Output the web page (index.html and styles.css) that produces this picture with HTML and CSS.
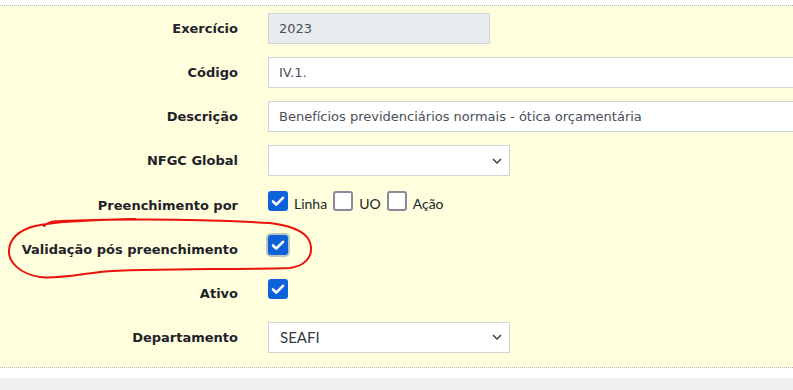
FILE: index.html
```html
<!DOCTYPE html>
<html lang="pt-BR">
<head>
    <meta charset="UTF-8">
    <meta name="viewport" content="width=device-width, initial-scale=1.0">
    <title>Editar Linha</title>
    <link rel="stylesheet" href="styles.css">
</head>
<body>
    <div class="page">
        <div class="panel">
            <div class="form-row">
                <label class="form-label" for="exercicio">Exercício</label>
                <div><input id="exercicio" class="field field-short" type="text" value="2023" readonly></div>
            </div>
            <div class="form-row">
                <label class="form-label" for="codigo">Código</label>
                <div class="field-clip"><input id="codigo" class="field field-wide" type="text" value="IV.1."></div>
            </div>
            <div class="form-row">
                <label class="form-label" for="descricao">Descrição</label>
                <div class="field-clip"><input id="descricao" class="field field-wide" type="text" value="Benefícios previdenciários normais - ótica orçamentária"></div>
            </div>
            <div class="form-row">
                <label class="form-label" for="nfgc">NFGC Global</label>
                <div>
                    <select id="nfgc" class="field field-select">
                        <option value=""></option>
                    </select>
                </div>
            </div>
            <div class="form-row">
                <span class="form-label">Preenchimento por</span>
                <div class="check-group">
                    <label class="check-item"><input type="checkbox" class="check" checked><span>Linha</span></label>
                    <label class="check-item"><input type="checkbox" class="check"><span>UO</span></label>
                    <label class="check-item"><input type="checkbox" class="check"><span>Ação</span></label>
                </div>
            </div>
            <div class="form-row">
                <label class="form-label" for="validacao">Validação pós preenchimento</label>
                <div class="check-group">
                    <input id="validacao" type="checkbox" class="check check-focus" checked>
                </div>
            </div>
            <div class="form-row">
                <label class="form-label" for="ativo">Ativo</label>
                <div class="check-group">
                    <input id="ativo" type="checkbox" class="check" checked>
                </div>
            </div>
            <div class="form-row">
                <label class="form-label" for="departamento">Departamento</label>
                <div>
                    <select id="departamento" class="field field-select">
                        <option>SEAFI</option>
                    </select>
                </div>
            </div>

            <!-- marcação feita à mão no print -->
            <svg class="annotation" width="793" height="390" viewBox="0 0 793 390">
                <path d="M44 226 C48 222 52 221 60 221 C120 219 200 219 270 223 C295 226 310 234 311 247 C312 258 304 266 290 268 C230 270 150 268 100 272 C75 275 55 279 40 277 C20 274 8 262 9 250 C10 238 20 230 35 226 C48 223 80 220 135 219" fill="none" stroke="#e8140c" stroke-width="2" stroke-linecap="round"/>
            </svg>
        </div>
        <div class="footer-bar"></div>
    </div>
</body>
</html>
```

FILE: styles.css
```css
body {
    margin: 0;
    background: #ffffff;
    font-family: "DejaVu Sans", Verdana, sans-serif;
    color: #212529;
    overflow: hidden;
}

.page {
    width: 793px;
    height: 390px;
    padding-top: 5px;
    box-sizing: border-box;
    position: relative;
    overflow: hidden;
}

.panel {
    background-color: #ffffdd;
    border-top: 1px dotted #b9b9b9;
    border-bottom: 1px dotted #b9b9b9;
    padding: 7px 0 1px;
}

.form-row {
    display: grid;
    grid-template-columns: 238px minmax(0, 1fr);
    column-gap: 30px;
    min-height: 31px;
    margin-bottom: 13.15px;
}

.form-label {
    font-size: 13px;
    font-weight: bold;
    line-height: 31px;
    text-align: right;
    white-space: nowrap;
    color: #1f2329;
}

.field-clip {
    overflow: hidden;
}

.field {
    box-sizing: border-box;
    height: 31px;
    border: 1px solid #ced4da;
    border-radius: 0;
    background-color: #ffffff;
    padding: 0 10px;
    font-family: "DejaVu Sans", Verdana, sans-serif;
    font-size: 13px;
    color: #495057;
    outline: none;
}

.field-short {
    width: 222px;
    background-color: #e9ecef;
}

.field-wide {
    width: 620px;
    border-right: none;
}

.field-select {
    width: 242px;
    appearance: none;
    -webkit-appearance: none;
    font-family: Lato, "Open Sans", sans-serif;
    font-size: 15px;
    color: #343a40;
    padding-left: 11px;
    background-image: url("data:image/svg+xml,%3Csvg xmlns='http://www.w3.org/2000/svg' width='10' height='6' viewBox='0 0 10 6'%3E%3Cpath d='M1 1l4 4 4-4' fill='none' stroke='%23343a40' stroke-width='1.4'/%3E%3C/svg%3E");
    background-repeat: no-repeat;
    background-position: right 7px center;
}

.check-group {
    display: flex;
    align-items: flex-start;
    padding-top: 1px;
}

.check-item {
    display: flex;
    align-items: center;
    margin-right: 6px;
    font-family: Lato, "Open Sans", sans-serif;
    font-size: 14px;
    color: #212529;
}

.check-item span {
    margin-left: 6px;
    padding-top: 4px;
}

.check {
    appearance: none;
    -webkit-appearance: none;
    box-sizing: border-box;
    width: 20px;
    height: 20px;
    margin: 0;
    border: 2px solid #8a8a9c;
    border-radius: 3px;
    background-color: #ffffff;
}

.check:checked {
    border: none;
    background-color: #0d62d9;
    background-image: url("data:image/svg+xml,%3Csvg xmlns='http://www.w3.org/2000/svg' width='20' height='20' viewBox='0 0 20 20'%3E%3Cpath d='M5 10.5l3.2 3.2L15 6.8' fill='none' stroke='%23ffffff' stroke-width='2.6' stroke-linecap='round' stroke-linejoin='round'/%3E%3C/svg%3E");
}

.check-focus {
    box-shadow: 0 0 0 2px #b8c7bf;
}

.annotation {
    position: absolute;
    left: 0;
    top: 0;
    pointer-events: none;
}

.footer-bar {
    margin-top: 10px;
    height: 20px;
    background-color: #efefef;
}
```
